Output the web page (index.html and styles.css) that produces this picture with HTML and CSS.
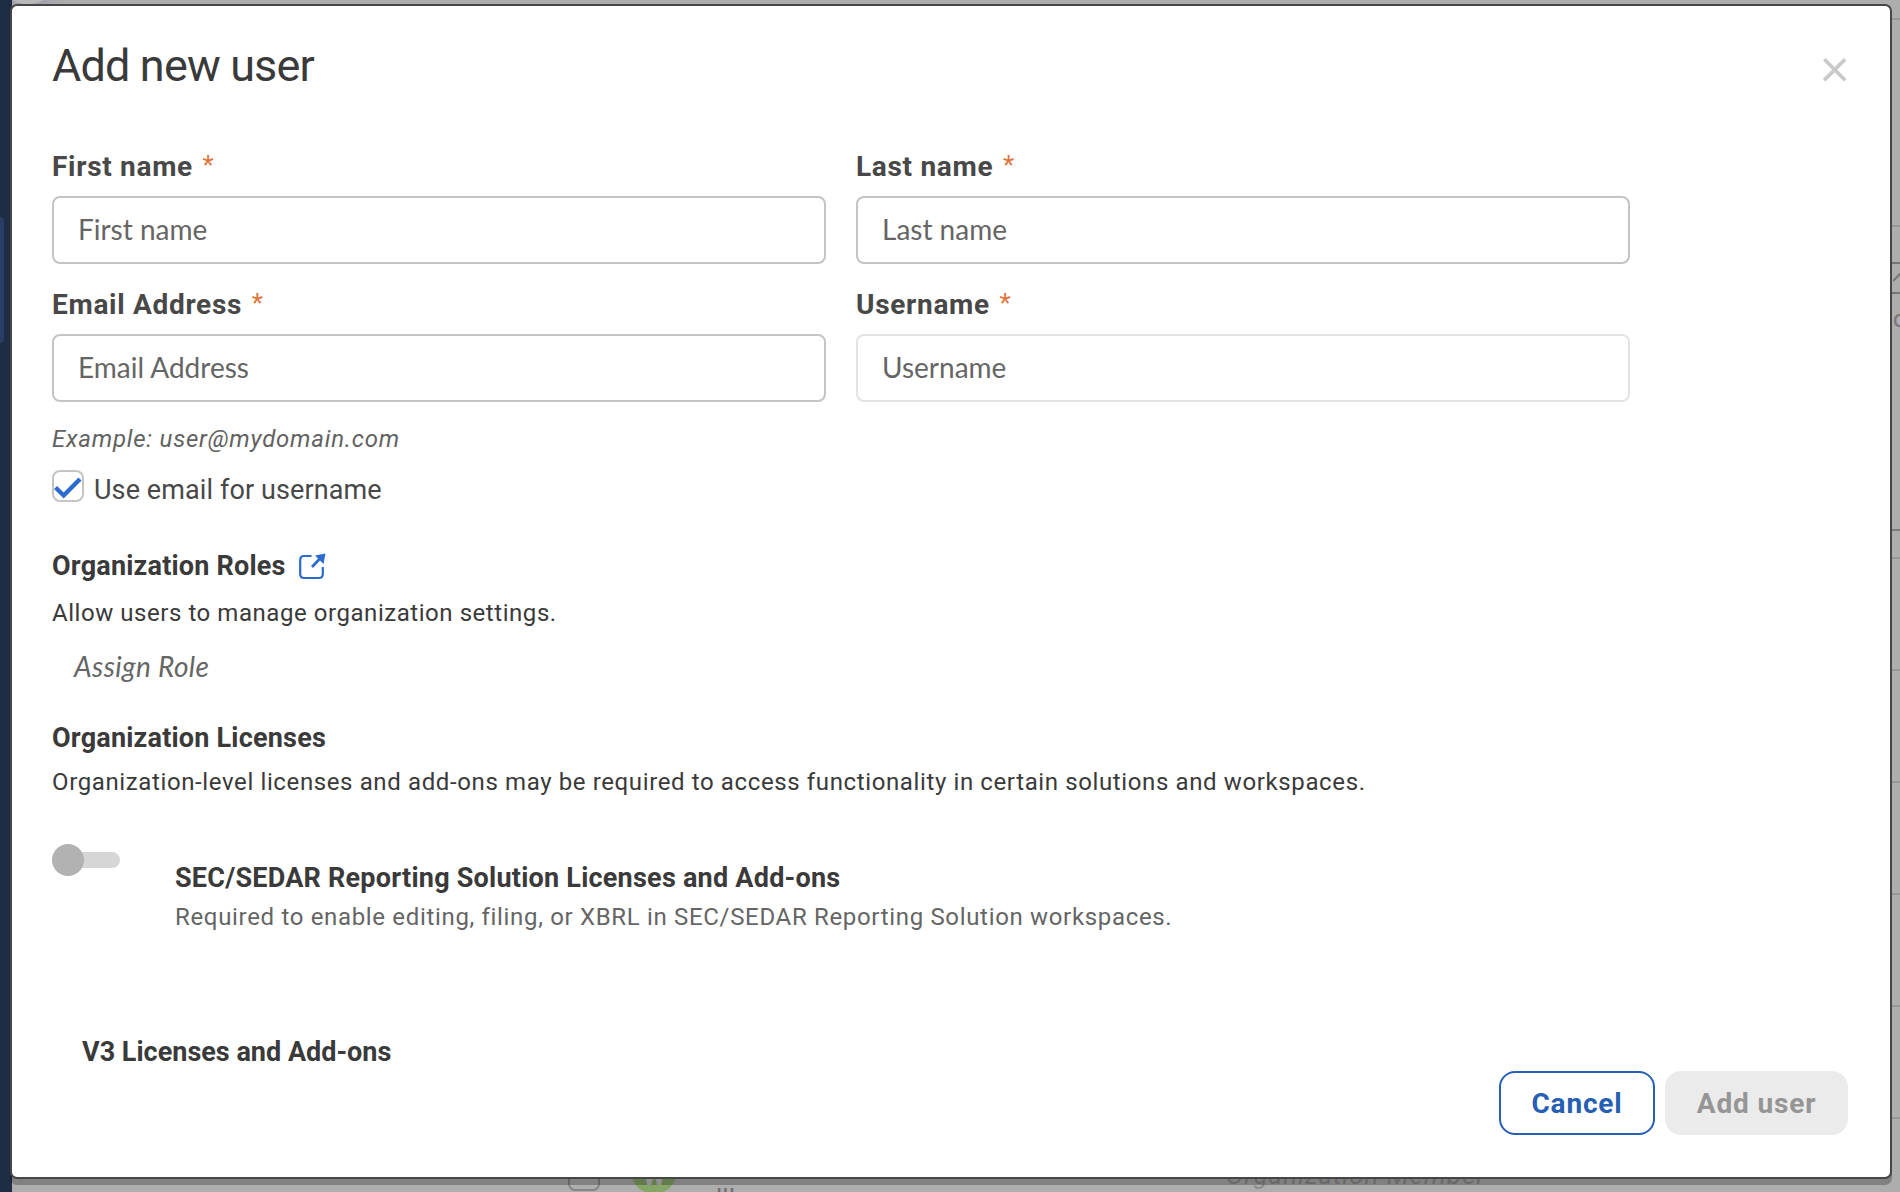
FILE: index.html
```
<!DOCTYPE html>
<html lang="en">
<head>
    <meta charset="UTF-8">
    <meta name="viewport" content="width=device-width, initial-scale=1.0">
    <title>Add new user</title>
    <link rel="stylesheet" href="styles.css">
</head>
<body>
    <!-- page behind the dialog -->
    <div class="page">
        <div class="sidebar"><div class="sidebar-active"></div></div>
        <div class="page-content">
            <div class="page-glow"></div>
            <div class="rule rule-top"></div>
            <div class="rule rule-filters"></div>
            <div class="edit-button">
                <svg width="20" height="28" viewBox="0 0 20 28"><path d="M0 17 L12 5 M7 17 h3" fill="none" stroke="#767676" stroke-width="2"/></svg>
            </div>
            <div class="col-label">c</div>
            <div class="table-rows">
                <div class="table-head"></div>
                <div class="table-row table-row-first"></div>
                <div class="table-row"></div>
                <div class="table-row"></div>
                <div class="table-row"></div>
                <div class="table-row"></div>
                <div class="table-row"></div>
            </div>
            <div class="row-check"></div>
            <div class="avatar">W</div>
            <div class="row-name">lll</div>
            <div class="row-role">Organization Member</div>
        </div>
    </div>

    <div class="modal">
        <div class="modal-header">
            <h1>Add new user</h1>
            <button class="close" aria-label="Close">
                <svg width="24" height="24" viewBox="0 0 24 24"><path d="M1.2 1.2 L22.2 22.2 M22.2 1.2 L1.2 22.2" stroke="#c9c9c9" stroke-width="3.6"/></svg>
            </button>
        </div>

        <div class="modal-body">
            <div class="form-grid">
                <div class="field">
                    <label for="firstName">First name <span class="required">*</span></label>
                    <input type="text" id="firstName" placeholder="First name">
                </div>
                <div class="field">
                    <label for="lastName">Last name <span class="required">*</span></label>
                    <input type="text" id="lastName" placeholder="Last name">
                </div>
                <div class="field">
                    <label for="email">Email Address <span class="required">*</span></label>
                    <input type="text" id="email" placeholder="Email Address">
                </div>
                <div class="field">
                    <label for="username">Username <span class="required">*</span></label>
                    <input type="text" id="username" placeholder="Username" disabled>
                </div>
            </div>
            <p class="hint">Example: user@mydomain.com</p>

            <div class="check-row">
                <div class="checkbox">
                    <svg width="28" height="28" viewBox="0 0 28 28"><path d="M1.5 12.5 L9.7 20.5 L26 4" fill="none" stroke="#2b6bd0" stroke-width="4.4"/></svg>
                </div>
                <span>Use email for username</span>
            </div>

            <h2 class="roles-title">Organization Roles
                <svg width="27" height="27" viewBox="0 0 27 27">
                    <path d="M12.5 3 H5 Q1.2 3 1.2 7 V21 Q1.2 25 5 25 H20 Q23.8 25 23.8 21 V14" fill="none" stroke="#2b6bd0" stroke-width="2.2"/>
                    <path d="M13 14 L21 5.5" stroke="#2b6bd0" stroke-width="2.8"/>
                    <path d="M16 2.5 L26.5 0.5 L24.5 11 Z" fill="#2b6bd0"/>
                </svg>
            </h2>
            <p class="text roles-text">Allow users to manage organization settings.</p>
            <p class="assign-role">Assign Role</p>

            <h2 class="licenses-title">Organization Licenses</h2>
            <p class="text licenses-text">Organization-level licenses and add-ons may be required to access functionality in certain solutions and workspaces.</p>

            <div class="license">
                <div class="toggle"><div class="toggle-knob"></div></div>
                <div class="license-info">
                    <h2>SEC/SEDAR Reporting Solution Licenses and Add-ons</h2>
                    <p class="text">Required to enable editing, filing, or XBRL in SEC/SEDAR Reporting Solution workspaces.</p>
                </div>
            </div>
            <h2 class="v3-title">V3 Licenses and Add-ons</h2>
        </div>

        <div class="modal-footer">
            <button class="btn btn-cancel">Cancel</button>
            <button class="btn btn-add" disabled>Add user</button>
        </div>
    </div>
</body>
</html>
```
FILE: styles.css
```
* {
    box-sizing: border-box;
}

body {
    margin: 0;
    height: 1192px;
    overflow: hidden;
    font-family: Roboto, "Liberation Sans", sans-serif;
    color: #3a3a3a;
}

h1, h2, p {
    margin: 0;
}

/* background page */
.page {
    display: flex;
    height: 1192px;
}

.sidebar {
    width: 12px;
    padding-top: 217px;
    background-color: #1e2d44;
}

.sidebar-active {
    width: 4px;
    height: 126px;
    border-radius: 0 4px 4px 0;
    background-color: #283e66;
}

.page-content {
    flex: 1;
    position: relative;
    overflow: hidden;
    background-color: #adadad;
}

.page-glow {
    position: absolute;
    left: -10px;
    top: -36px;
    width: 52px;
    height: 40px;
    border-radius: 50%;
    background-color: #b9b9bb;
    box-shadow: 0 0 14px 6px #9fa1a8;
}

.rule {
    position: absolute;
    left: 0;
    right: 0;
    height: 2px;
    background-color: #979797;
}

.rule-top {
    top: 18px;
}

.rule-filters {
    top: 225px;
}

.edit-button {
    position: absolute;
    top: 262px;
    right: -20px;
    width: 60px;
    height: 32px;
    padding-left: 31px;
    border: 2px solid #767676;
}

.col-label {
    position: absolute;
    top: 305px;
    left: 1881px;
    font-size: 24px;
    color: #767676;
}

.table-rows {
    padding-top: 529px;
}

.table-head {
    height: 28px;
    border-top: 2px solid #7c7c7c;
}

.table-row {
    height: 112px;
    border-top: 2px solid #979797;
}

.row-check {
    position: absolute;
    top: 1159px;
    left: 556px;
    width: 32px;
    height: 32px;
    border: 2px solid #868686;
    border-radius: 7px;
}

.avatar {
    position: absolute;
    top: 1148px;
    left: 619px;
    width: 46px;
    height: 46px;
    border-radius: 50%;
    background-color: #86a667;
    color: #c0c0c0;
    font-size: 26px;
    font-weight: 700;
    line-height: 57px;
    text-align: center;
}

.row-name {
    position: absolute;
    top: 1182px;
    left: 704px;
    font-size: 26px;
    line-height: 32px;
    color: #6e6e6e;
}

.row-role {
    position: absolute;
    top: 1158px;
    left: 1214px;
    font-size: 26px;
    font-style: italic;
    line-height: 34px;
    letter-spacing: 0.9px;
    color: #8c8c8c;
}

/* dialog */
.modal {
    position: absolute;
    top: 4px;
    left: 10px;
    width: 1882px;
    height: 1175px;
    display: flex;
    flex-direction: column;
    background-color: #fff;
    border: 2px solid #464646;
    border-radius: 7px;
    box-shadow: 0 6px 0 rgba(0, 0, 0, 0.25);
}

.modal-header {
    display: flex;
    justify-content: space-between;
    padding: 30px 43px 0 40px;
    height: 140px;
}

h1 {
    font-size: 45px;
    font-weight: 400;
    line-height: 60px;
    letter-spacing: -0.85px;
}

.close {
    height: 24px;
    margin-top: 22px;
    padding: 0;
    border: none;
    background: none;
    cursor: pointer;
}

.close svg {
    display: block;
}

.modal-body {
    flex: 1;
    min-height: 0;
    overflow: hidden;
    padding-left: 40px;
}

.form-grid {
    display: grid;
    grid-template-columns: 774px 774px;
    gap: 20px 30px;
}

.field label {
    display: block;
    padding-top: 1px;
    margin-bottom: 9px;
    font-size: 28px;
    font-weight: 700;
    line-height: 40px;
    letter-spacing: 0.7px;
    color: #484848;
}

.required {
    display: inline-block;
    height: 30px;
    margin-left: 2px;
    font-weight: 400;
    font-size: 26px;
    line-height: 30px;
    vertical-align: 2px;
    color: #e0743a;
}

.field input {
    display: block;
    width: 100%;
    height: 68px;
    padding: 0 24px 2px;
    border: 2px solid #c4c4c4;
    border-radius: 8px;
    background-color: #fff;
    font-family: Lato, sans-serif;
    font-size: 28px;
}

.field input:disabled {
    border-color: #e3e3e3;
}

.field input::placeholder {
    color: #656565;
    opacity: 1;
}

.hint {
    margin-top: 21px;
    font-size: 24px;
    font-style: italic;
    line-height: 32px;
    letter-spacing: 0.77px;
    color: #626262;
}

.check-row {
    display: flex;
    gap: 10px;
    height: 35px;
    margin-top: 15px;
    color: #484848;
    font-size: 27px;
    line-height: 32px;
    letter-spacing: 0.1px;
}

.check-row span {
    padding-top: 4px;
}

.checkbox {
    width: 32px;
    height: 32px;
    border: 2px solid #c4c4c4;
    border-radius: 8px;
}

.checkbox svg {
    display: block;
    margin-top: 3px;
}

h2 {
    font-size: 27px;
    font-weight: 700;
    line-height: 40px;
    letter-spacing: 0.2px;
}

.roles-title {
    display: flex;
    align-items: center;
    gap: 13px;
    margin-top: 41px;
}

.text {
    font-size: 24px;
    line-height: 32px;
    letter-spacing: 0.62px;
}

.roles-text {
    margin-top: 11px;
    letter-spacing: 0.55px;
}

.assign-role {
    margin-top: 17px;
    padding-left: 22px;
    font-family: Lato, sans-serif;
    font-size: 28px;
    font-style: italic;
    line-height: 40px;
    letter-spacing: 0.38px;
    color: #656565;
}

.licenses-title {
    margin-top: 32px;
}

.licenses-text {
    margin-top: 8px;
}

.license {
    display: flex;
    gap: 55px;
    margin-top: 46px;
}

.toggle {
    width: 68px;
    height: 16px;
    margin-top: 8px;
    border-radius: 8px;
    background-color: #d6d6d6;
}

.toggle-knob {
    width: 32px;
    height: 32px;
    margin-top: -8px;
    border-radius: 50%;
    background-color: #b2b2b2;
}

.license-info {
    padding-top: 14px;
}

.license-info h2 {
    letter-spacing: 0.23px;
}

.license-info .text {
    margin-top: 3px;
    letter-spacing: 0.67px;
    color: #656565;
}

.v3-title {
    margin-top: 100px;
    padding-left: 30px;
    line-height: 38px;
    letter-spacing: 0;
}

.modal-footer {
    display: flex;
    justify-content: flex-end;
    gap: 10px;
    padding: 0 42px 42px;
}

.btn {
    height: 64px;
    border-radius: 16px;
    font-family: inherit;
    font-size: 28px;
    font-weight: 700;
    letter-spacing: 0.85px;
}

.btn-cancel {
    width: 156px;
    border: 2px solid #265fb4;
    background-color: #fff;
    color: #265fb4;
}

.btn-add {
    width: 183px;
    border: none;
    background-color: #ebebeb;
    color: #959595;
}
```
